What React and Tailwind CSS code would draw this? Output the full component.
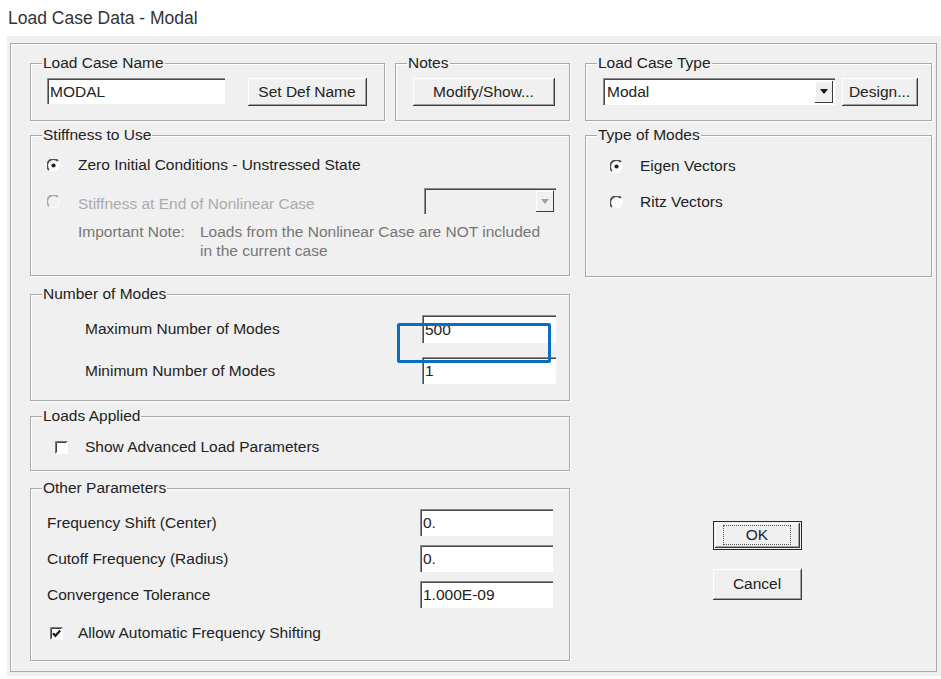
// "Load Case Data - Modal" dialog, classic Windows look.

function Group({ title, className = '', children }) {
  return (
    <fieldset
      className={`relative border border-[#a9a9a9] shadow-[inset_1px_1px_0_#fff,1px_1px_0_#fff] ${className}`}
    >
      <legend className="ml-[11px] bg-[#f0f0f0] px-[1px] leading-[18px]">{title}</legend>
      {children}
    </fieldset>
  );
}

function Field({ value, className = '' }) {
  return (
    <div
      className={`flex items-center border-t border-l border-t-[#8c8c8c] border-l-[#8c8c8c] bg-white pl-[2px] leading-none shadow-[inset_1px_1px_0_#4a4a4a] ${className}`}
    >
      {value}
    </div>
  );
}

function Btn({ children, className = '' }) {
  return (
    <div
      className={`flex items-center justify-center border-r border-b border-r-[#3c3c3c] border-b-[#3c3c3c] bg-[#f0f0f0] shadow-[inset_1px_1px_0_#fff,inset_-1px_-1px_0_#a0a0a0] ${className}`}
    >
      {children}
    </div>
  );
}

function Arrow({ color = '#111' }) {
  return (
    <svg width="8" height="5" viewBox="0 0 8 5">
      <path d="M0 0h8L4 5z" fill={color} />
    </svg>
  );
}

function Combo({ value, disabled, className = '' }) {
  return (
    <div
      className={`flex items-stretch border-t border-l border-t-[#8c8c8c] border-l-[#8c8c8c] shadow-[inset_1px_1px_0_#4a4a4a] ${disabled ? 'bg-[#f0f0f0]' : 'bg-white'} ${className}`}
    >
      <div className="flex flex-1 items-center pl-[3px]">{value}</div>
      <div className="my-[2px] mr-[2px] flex w-[18px] items-center justify-center border-r border-b border-r-[#3c3c3c] border-b-[#3c3c3c] bg-[#f0f0f0] shadow-[inset_1px_1px_0_#fff]">
        <Arrow color={disabled ? '#a0a0a0' : '#111'} />
      </div>
    </div>
  );
}

function Radio({ checked, disabled }) {
  return (
    <svg width="13" height="13" viewBox="0 0 13 13" className="shrink-0">
      <circle cx="6.5" cy="6.5" r="6" fill={disabled ? '#f0f0f0' : '#fbfbfb'} />
      <path d="M11 2A6 6 0 0 0 2 11" fill="none" stroke={disabled ? '#a8a8a8' : '#505050'} strokeWidth="1.8" />
      <path d="M2.4 10.6A5.8 5.8 0 0 0 10.6 2.4" fill="none" stroke="#ffffff" strokeWidth="1" />
      {checked && <circle cx="6.5" cy="6.5" r="2.1" fill="#222" />}
    </svg>
  );
}

function Check({ checked }) {
  return (
    <svg width="13" height="13" viewBox="0 0 13 13" className="shrink-0">
      <rect x="0" y="0" width="13" height="13" fill="#fff" />
      <path d="M0.5 12.5V0.5h12" fill="none" stroke="#7a7a7a" />
      <path d="M1.5 11.5V1.5h10" fill="none" stroke="#404040" />
      {checked && <path d="M3 6.2l2.4 2.6L10.2 3.6" fill="none" stroke="#1e1e1e" strokeWidth="2.2" />}
    </svg>
  );
}

function FieldRow({ label, value, className = '' }) {
  return (
    <div className={`flex items-center ${className}`}>
      <span className="w-[373px]">{label}</span>
      <Field value={value} className="h-[27px] w-[133px]" />
    </div>
  );
}

export default function App() {
  return (
    <div className="min-h-screen bg-white font-['Liberation_Sans',Arial,sans-serif] text-[15.5px] text-[#222]">
      <div className="flex h-9 items-center pl-2 text-[17.5px] text-[#333]">Load Case Data - Modal</div>

      <div className="ml-[7px] h-[640px] bg-[#f0f0f0] pt-[7px]">
        <div className="ml-[3px] mr-[4px] flex h-[629px] gap-[15px] border border-[#a9a9a9] pt-[10px] pl-[19px] shadow-[inset_1px_1px_0_#fff]">
          {/* left column */}
          <div className="flex w-[540px] flex-col">
            <div className="flex h-[67px] gap-[10px]">
              <Group title="Load Case Name" className="w-[355px]">
                <div className="flex items-start pt-[6px] pl-[16px]">
                  <Field value="MODAL" className="h-[26px] w-[178px]" />
                  <Btn className="ml-[23px] h-[28px] w-[119px]">Set Def Name</Btn>
                </div>
              </Group>
              <Group title="Notes" className="w-[175px]">
                <div className="pt-[6px] pl-[17px]">
                  <Btn className="h-[28px] w-[142px]">Modify/Show...</Btn>
                </div>
              </Group>
            </div>

            <Group title="Stiffness to Use" className="mt-[5px] h-[150px]">
              <div className="mt-[11px] flex h-[20px] items-center pl-[16px]">
                <Radio checked />
                <span className="ml-[18px]">Zero Initial Conditions - Unstressed State</span>
              </div>
              <div className="mt-[13px] flex h-[26px] items-center pl-[16px]">
                <Radio disabled />
                <span className="mt-[5px] ml-[18px] w-[346px] text-[#ababab]">Stiffness at End of Nonlinear Case</span>
                <Combo value="" disabled className="h-[26px] w-[132px]" />
              </div>
              <div className="mt-[8px] flex pl-[47px] leading-[19px] text-[#767676]">
                <span className="w-[122px]">Important Note:</span>
                <span>
                  Loads from the Nonlinear Case are NOT included
                  <br />
                  in the current case
                </span>
              </div>
            </Group>

            <Group title="Number of Modes" className="mt-[9px] h-[116px]">
              <div className="mt-[12px] flex items-center pl-[54px]">
                <span className="w-[337px]">Maximum Number of Modes</span>
                <Field value="500" className="h-[28px] w-[134px]" />
              </div>
              <div className="mt-[14px] flex items-center pl-[54px]">
                <span className="w-[337px]">Minimum Number of Modes</span>
                <Field value="1" className="h-[27px] w-[134px]" />
              </div>
              <div className="absolute top-[20px] left-[366px] h-[40px] w-[154px] rounded-[2px] border-[3px] border-[#0b6dbf]" />
            </Group>

            <Group title="Loads Applied" className="mt-[6px] h-[64px]">
              <div className="mt-[12px] flex h-[20px] items-center pl-[24px]">
                <Check />
                <span className="ml-[17px]">Show Advanced Load Parameters</span>
              </div>
            </Group>

            <Group title="Other Parameters" className="mt-[8px] h-[182px]">
              <div className="pl-[16px]">
                <FieldRow label="Frequency Shift (Center)" value="0." className="mt-[12px]" />
                <FieldRow label="Cutoff Frequency (Radius)" value="0." className="mt-[9px]" />
                <FieldRow label="Convergence Tolerance" value="1.000E-09" className="mt-[9px]" />
                <div className="mt-[15px] flex h-[20px] items-center pl-[3px]">
                  <Check checked />
                  <span className="ml-[15px]">Allow Automatic Frequency Shifting</span>
                </div>
              </div>
            </Group>
          </div>

          {/* right column */}
          <div className="flex w-[347px] flex-col">
            <Group title="Load Case Type" className="h-[67px]">
              <div className="flex items-start pt-[6px] pl-[17px]">
                <Combo value="Modal" className="h-[27px] w-[232px]" />
                <Btn className="ml-[7px] h-[28px] w-[76px]">Design...</Btn>
              </div>
            </Group>

            <Group title="Type of Modes" className="mt-[5px] h-[151px]">
              <div className="mt-[12px] flex h-[20px] items-center pl-[24px]">
                <Radio checked />
                <span className="ml-[17px]">Eigen Vectors</span>
              </div>
              <div className="mt-[16px] flex h-[20px] items-center pl-[24px]">
                <Radio />
                <span className="ml-[17px]">Ritz Vectors</span>
              </div>
            </Group>

            <div className="mt-[244px] ml-[128px] flex flex-col">
              <div className="h-[29px] w-[89px] border border-[#2a2a2a] p-[1px]">
                <Btn className="h-full w-full">
                  <span className="border border-dotted border-[#555] px-[22px] leading-[18px]">OK</span>
                </Btn>
              </div>
              <Btn className="mt-[19px] h-[31px] w-[89px]">Cancel</Btn>
            </div>
          </div>
        </div>
      </div>
    </div>
  );
}
